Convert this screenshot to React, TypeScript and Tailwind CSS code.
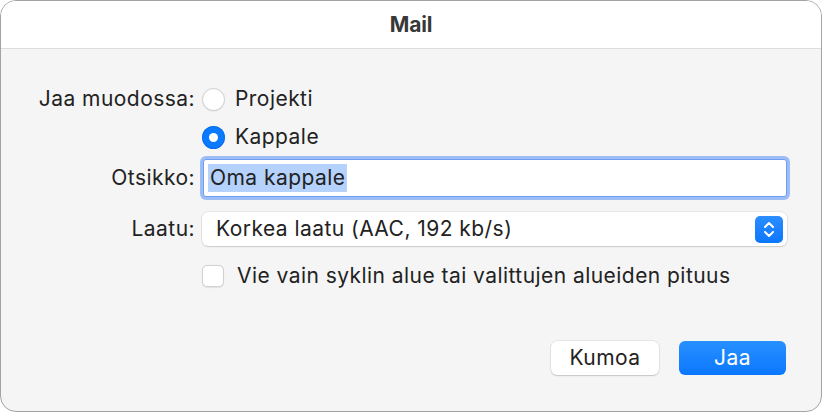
import React from 'react';

const font = { fontFamily: 'Inter, "Noto Sans", "Liberation Sans", sans-serif' };

const Radio = ({ checked }: { checked?: boolean }) =>
  checked ? (
    <span className="flex h-[23px] w-[23px] items-center justify-center rounded-full bg-[#0a7aff] shadow-[inset_0_0_0_1px_rgba(0,90,220,0.4)]">
      <span className="h-[9px] w-[9px] rounded-full bg-white" />
    </span>
  ) : (
    <span className="block h-[23px] w-[23px] rounded-full border border-[#cfcfcf] bg-white shadow-[0_0.5px_1px_rgba(0,0,0,0.08)]" />
  );

export default function App() {
  return (
    <div className="h-[412px] w-[822px] bg-white text-[#222222]" style={font}>
      <div className="flex h-full w-full flex-col overflow-hidden rounded-[16px] border-[1.5px] border-[#a3a3a3] bg-[#f5f5f5]">
        <div className="flex h-[48px] shrink-0 items-center justify-center border-b border-[#dcdcdc] bg-white">
          <span className="text-[21px] font-bold tracking-[-0.2px] text-[#383838]">Mail</span>
        </div>

        <div className="flex flex-col pt-[38px] text-[21px] tracking-[0.45px]">
          <div className="flex h-[24px] items-center">
            <span className="w-[198px] pr-[4px] text-right">Jaa muodossa:</span>
            <div className="flex items-center gap-[10px] pl-[3px]">
              <Radio />
              <span>Projekti</span>
            </div>
          </div>

          <div className="mt-[14px] flex h-[24px] items-center">
            <span className="w-[198px]" />
            <div className="flex items-center gap-[10px] pl-[3px]">
              <Radio checked />
              <span>Kappale</span>
            </div>
          </div>

          <div className="mt-[10px] flex h-[38px] items-center">
            <span className="w-[198px] pr-[4px] text-right">Otsikko:</span>
            <div className="ml-[4px] flex h-[38px] w-[584px] items-center rounded-[3px] border border-[#6f9bf0] bg-white pl-[4px] shadow-[0_0_0_3px_#9dbdf6]">
              <span className="bg-[#b4d2fb] px-[2px] leading-[28px]">Oma kappale</span>
            </div>
          </div>

          <div className="mt-[15px] flex h-[34px] items-center">
            <span className="w-[198px] pr-[4px] text-right">Laatu:</span>
            <div className="ml-[3px] flex h-[34px] w-[585px] items-center justify-between rounded-[6px] bg-white pl-[14px] pr-[4px] shadow-[0_0_0_0.5px_rgba(0,0,0,0.12),0_1px_1.5px_rgba(0,0,0,0.12)]">
              <span>Korkea laatu (AAC, 192 kb/s)</span>
              <span className="flex h-[27px] w-[28px] items-center justify-center rounded-[5px] bg-gradient-to-b from-[#2a8dff] to-[#0a77ff]">
                <svg width="12" height="19" viewBox="0 0 12 19" fill="none" stroke="white" strokeWidth="2" strokeLinecap="round" strokeLinejoin="round">
                  <path d="M2 7 L6 3 L10 7" />
                  <path d="M2 12 L6 16 L10 12" />
                </svg>
              </span>
            </div>
          </div>

          <div className="mt-[17px] flex h-[25px] items-center">
            <span className="w-[198px]" />
            <div className="flex items-center gap-[13px] pl-[3px]">
              <span className="block h-[22px] w-[22px] rounded-[5px] border border-[#d0d0d0] bg-white shadow-[0_0.5px_1px_rgba(0,0,0,0.08)]" />
              <span>Vie vain syklin alue tai valittujen alueiden pituus</span>
            </div>
          </div>

          <div className="mt-[53px] flex justify-end gap-[20px] pr-[35px]">
            <button className="h-[34px] w-[108px] rounded-[6px] bg-white text-[21px] shadow-[0_0_0_0.5px_rgba(0,0,0,0.12),0_1px_1.5px_rgba(0,0,0,0.15)]">
              Kumoa
            </button>
            <button className="h-[34px] w-[107px] rounded-[6px] bg-gradient-to-b from-[#2790ff] to-[#0a77ff] text-[21px] text-white">
              Jaa
            </button>
          </div>
        </div>
      </div>
    </div>
  );
}
